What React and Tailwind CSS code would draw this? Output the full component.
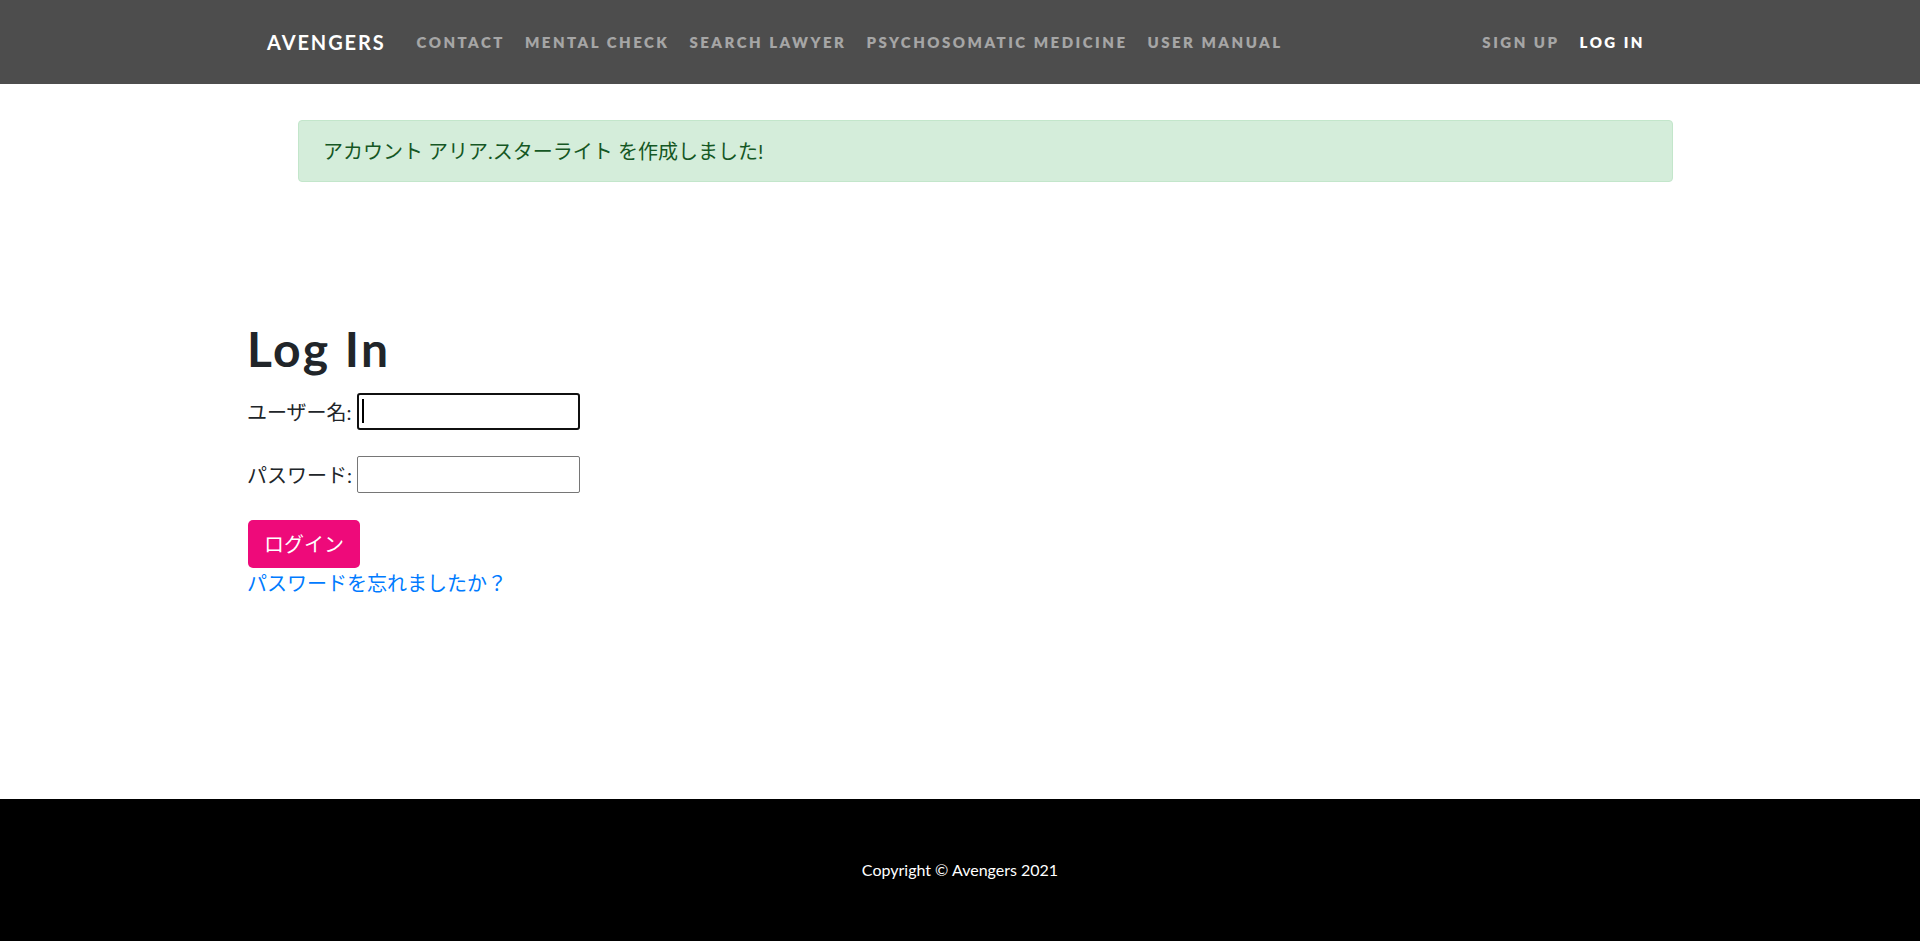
const navLinks = ['Contact', 'Mental Check', 'Search Lawyer', 'Psychosomatic Medicine', 'User Manual'];

export default function App() {
  return (
    <div className="bg-white font-['Lato','Noto_Sans_CJK_JP',sans-serif]">
      {/* ナビゲーション */}
      <nav className="h-[84px] bg-[#4d4d4d]">
        <div className="mx-auto flex h-full w-[1386px] items-center">
          <a className="mr-[21px] text-[20px] font-bold uppercase tracking-[1.9px] text-white">Avengers</a>
          <ul className="flex items-center">
            {navLinks.map((l) => (
              <li key={l}>
                <a className="block px-[10px] text-[15px] font-extrabold uppercase tracking-[2.5px] text-white/50">{l}</a>
              </li>
            ))}
          </ul>
          <ul className="ml-auto flex items-center">
            <li>
              <a className="block px-[10px] text-[15px] font-extrabold uppercase tracking-[2.5px] text-white/50">Sign Up</a>
            </li>
            <li>
              <a className="block pl-[10px] pr-[8px] text-[15px] font-extrabold uppercase tracking-[2.5px] text-white">Log In</a>
            </li>
          </ul>
        </div>
      </nav>

      {/* メイン */}
      <main className="h-[715px] pt-[36px]">
        <div className="mx-auto w-[1426px]">
          <div className="ml-[51px] w-[1375px] rounded-[4px] border border-[#c3e6cb] bg-[#d4edda] px-6 py-[15px] text-[20px] leading-[30px] text-[#155724]">
            アカウント アリア.スターライト を作成しました!
          </div>

          <h1 className="mt-[138px] h-[58px] text-[48px] font-bold leading-[58px] tracking-[2.4px] text-[#212529]">Log In</h1>

          <form className="flex flex-col items-start text-[20px] text-[#212529]">
            <div className="mt-[15px] flex h-[37px] items-center">
              <label className="leading-[30px]">ユーザー名:</label>
              <div className="relative ml-[5px]">
                <input
                  type="text"
                  readOnly
                  className="block h-[37px] w-[223px] rounded-[3px] border-2 border-[#101010] bg-white px-1 outline-none"
                />
                <span className="absolute left-[5px] top-[6px] h-[24px] w-[2px] bg-black" />
              </div>
            </div>
            <div className="mt-[26px] flex h-[37px] items-center">
              <label className="leading-[30px]">パスワード:</label>
              <input
                type="password"
                readOnly
                className="ml-[5px] block h-[37px] w-[223px] rounded-[2px] border border-[#767676] bg-white px-1 outline-none"
              />
            </div>
            <button
              type="button"
              className="ml-px mt-[27px] h-[48px] rounded-[5px] bg-[#ee0a7a] px-4 text-[20px] leading-[30px] text-white"
            >
              ログイン
            </button>
            <a className="leading-[30px] text-[#007bff]">パスワードを忘れましたか？</a>
          </form>
        </div>
      </main>

      {/* フッター */}
      <footer className="flex h-[142px] items-center justify-center bg-black">
        <p className="text-[16px] text-white">Copyright © Avengers 2021</p>
      </footer>
    </div>
  );
}
